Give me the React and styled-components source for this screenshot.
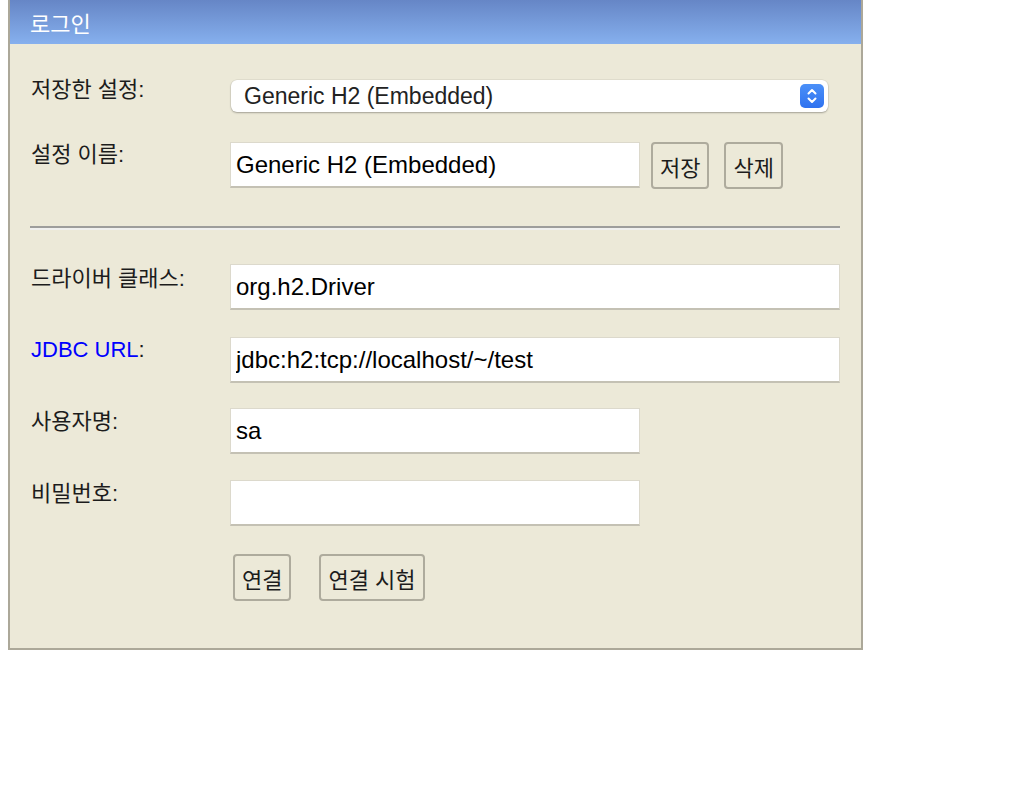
import styled, { createGlobalStyle } from "styled-components";

const GlobalStyle = createGlobalStyle`
  body {
    margin: 0 8px;
    background: #ffffff;
    font-family: "Liberation Sans", "Noto Sans CJK KR", sans-serif;
  }
`;

const Panel = styled.form`
  width: 851px;
  background-color: #ece9d8;
  border: 2px solid #aca899;
  border-top: none;
  padding-bottom: 47px;
`;

const Title = styled.div`
  height: 44px;
  display: flex;
  align-items: center;
  padding-left: 20px;
  background: linear-gradient(#6686c6, #86b0ee);
  color: #ffffff;
  font-size: 22px;
`;

const Body = styled.div`
  padding: 0 21px;
  display: flex;
  flex-direction: column;
`;

const Row = styled.div`
  display: grid;
  grid-template-columns: 199px 1fr;
  align-items: start;
  margin-top: ${(p) => p.$top}px;
`;

const Label = styled.label`
  font-size: 22px;
  line-height: 26px;
  color: #1c1c1c;
  margin-top: ${(p) => p.$shift || 0}px;
`;

const Link = styled.span`
  color: #0000ff;
`;

const Field = styled.div`
  display: flex;
  align-items: flex-start;
`;

const TextInput = styled.input`
  box-sizing: border-box;
  width: ${(p) => p.$width}px;
  height: 46px;
  margin: 0;
  padding: 0 5px;
  border: 1px solid #dcd9cc;
  border-bottom: 2px solid #c4c1b4;
  background: #ffffff;
  font-family: "Liberation Sans", sans-serif;
  font-size: 24px;
  color: #000000;
  outline: none;
`;

const SelectBox = styled.div`
  position: relative;
  width: 597px;
  height: 32px;
  margin-left: 1px;
  border-radius: 6px;
  background: #ffffff;
  box-shadow: 0 1px 2px rgba(0, 0, 0, 0.28), 0 0 0 0.5px rgba(0, 0, 0, 0.08);
`;

const Select = styled.select`
  appearance: none;
  width: 100%;
  height: 100%;
  border: none;
  background: transparent;
  padding: 0 0 0 13px;
  font-family: "Liberation Sans", sans-serif;
  font-size: 23px;
  color: #222222;
  outline: none;
`;

const Stepper = styled.svg`
  position: absolute;
  right: 4px;
  top: 4px;
  pointer-events: none;
`;

const Button = styled.button`
  box-sizing: border-box;
  height: 47px;
  margin: 0;
  padding: 0 7px;
  border: 2px solid #aeab9d;
  border-radius: 4px;
  background: #ece9d8;
  font-family: "Liberation Sans", "Noto Sans CJK KR", sans-serif;
  font-size: 22px;
  color: #1c1c1c;
  margin-left: ${(p) => p.$left || 0}px;
`;

const Divider = styled.hr`
  margin: 37px 0 0 -1px;
  height: 0;
  border: none;
  border-top: 2px solid #9d9d9b;
  border-bottom: 2px solid #f0f0ee;
`;

const Actions = styled.div`
  display: flex;
  gap: 28px;
  margin: 28px 0 0 202px;
`;

function StepperIcon() {
  return (
    <Stepper width="24" height="24" viewBox="0 0 24 24">
      <defs>
        <linearGradient id="stepBlue" x1="0" y1="0" x2="0" y2="1">
          <stop offset="0" stopColor="#4b90f8" />
          <stop offset="1" stopColor="#2f72ef" />
        </linearGradient>
      </defs>
      <rect width="24" height="24" rx="5" fill="url(#stepBlue)" />
      <path
        d="M8.5 9.5 L12 6 L15.5 9.5 M8.5 14.5 L12 18 L15.5 14.5"
        fill="none"
        stroke="#ffffff"
        strokeWidth="2"
        strokeLinecap="round"
        strokeLinejoin="round"
      />
    </Stepper>
  );
}

export default function App() {
  return (
    <>
      <GlobalStyle />
      <Panel onSubmit={(e) => e.preventDefault()}>
        <Title>로그인</Title>
        <Body>
          <Row $top={36}>
            <Label $shift={-3}>저장한 설정:</Label>
            <SelectBox>
              <Select defaultValue="Generic H2 (Embedded)">
                <option>Generic H2 (Embedded)</option>
                <option>Generic H2 (Server)</option>
              </Select>
              <StepperIcon />
            </SelectBox>
          </Row>
          <Row $top={30}>
            <Label>설정 이름:</Label>
            <Field>
              <TextInput $width={410} defaultValue="Generic H2 (Embedded)" />
              <Button type="button" $left={11}>저장</Button>
              <Button type="button" $left={15}>삭제</Button>
            </Field>
          </Row>
          <Divider />
          <Row $top={34}>
            <Label $shift={2}>드라이버 클래스:</Label>
            <TextInput $width={610} defaultValue="org.h2.Driver" />
          </Row>
          <Row $top={27}>
            <Label>
              <Link>JDBC URL</Link>:
            </Label>
            <TextInput $width={610} defaultValue="jdbc:h2:tcp://localhost/~/test" />
          </Row>
          <Row $top={25}>
            <Label $shift={1}>사용자명:</Label>
            <TextInput $width={410} defaultValue="sa" />
          </Row>
          <Row $top={26}>
            <Label $shift={1}>비밀번호:</Label>
            <TextInput $width={410} type="password" defaultValue="" />
          </Row>
          <Actions>
            <Button type="submit">연결</Button>
            <Button type="button">연결 시험</Button>
          </Actions>
        </Body>
      </Panel>
    </>
  );
}
